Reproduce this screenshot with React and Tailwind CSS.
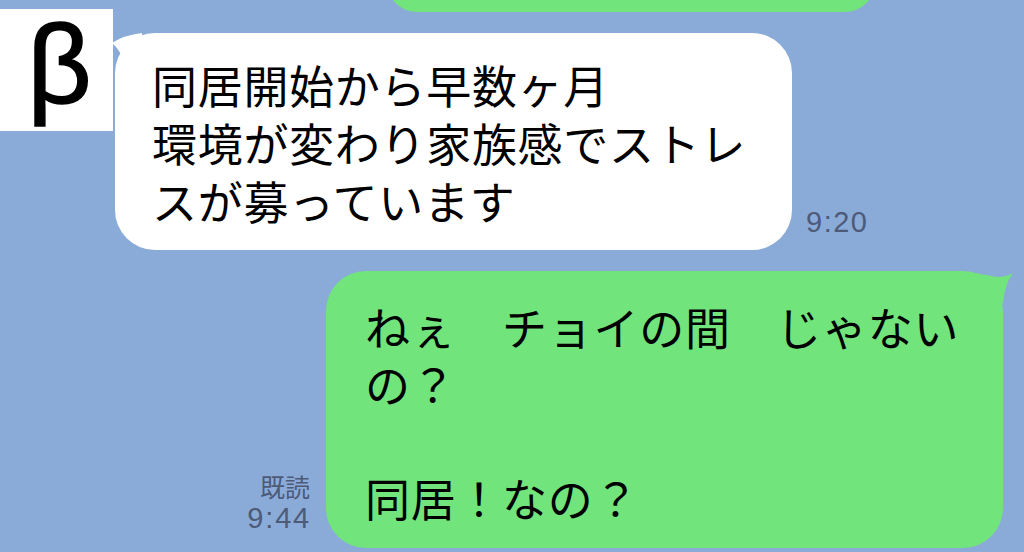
export default function App() {
  const jp = { fontFamily: '"Noto Sans CJK JP", "Noto Sans", sans-serif' };
  const lat = { fontFamily: '"Liberation Sans", Arial, sans-serif' };
  return (
    <div className="w-[1024px] h-[552px] bg-[#8aabd8] overflow-hidden flex flex-col" style={jp}>
      <div className="h-[12px] flex flex-col justify-end overflow-hidden pl-[387px] shrink-0">
        <div className="h-[40px] w-[488px] shrink-0 bg-[#72e47c] rounded-b-[30px]" />
      </div>
      <div className="flex items-start -mt-[3px]">
        <div className="w-[113px] h-[122px] bg-white flex justify-center shrink-0">
          <span className="text-[112px] leading-[112px] text-black ml-[6px] [-webkit-text-stroke:1.5px_black]" style={lat}>β</span>
        </div>
        <div className="relative ml-[2px] mt-[24px] w-[677px] h-[217px] bg-white rounded-[40px] pl-[37px] pt-[23px] text-[45px] leading-[58px] text-black tracking-[0.7px] shrink-0">
          <svg className="absolute -left-[5px] top-0" width="40" height="40" viewBox="0 0 40 40">
            <path d="M32 0 Q14 2 2 10 Q12 18 14 32 L34 32 Z" fill="#fff" />
          </svg>
          <div className="relative">同居開始から早数ヶ月</div>
          <div className="relative">環境が変わり家族感でストレ</div>
          <div className="relative">スが募っています</div>
        </div>
        <div className="self-end ml-[14px] mb-[13px] text-[29px] leading-[30px] tracking-[1.5px] text-[#4d5a78]" style={lat}>9:20</div>
      </div>
      <div className="flex items-end mt-[21px]">
        <div className="w-[310px] shrink-0 flex flex-col items-end mb-[14px] text-[#4d5a78]">
          <div className="text-[25px] leading-[32px]" style={jp}>既読</div>
          <div className="text-[29px] leading-[32px] tracking-[1.8px] -mr-[1px]" style={lat}>9:44</div>
        </div>
        <div className="relative ml-[16px] w-[677px] h-[277px] bg-[#72e47c] rounded-[40px] pl-[39px] pt-[27px] text-[45px] leading-[57px] text-black tracking-[0.7px] shrink-0">
          <svg className="absolute -right-[12px] top-0" width="40" height="40" viewBox="0 0 40 40">
            <path d="M0 2 Q22 6 22 6 Q32 6 38 2 Q30 12 28 32 L0 32 Z" fill="#72e47c" />
          </svg>
          <div className="relative">ねぇ　チョイの間　じゃない</div>
          <div className="relative">の？</div>
          <div className="relative">&nbsp;</div>
          <div className="relative">同居！なの？</div>
        </div>
      </div>
    </div>
  );
}
